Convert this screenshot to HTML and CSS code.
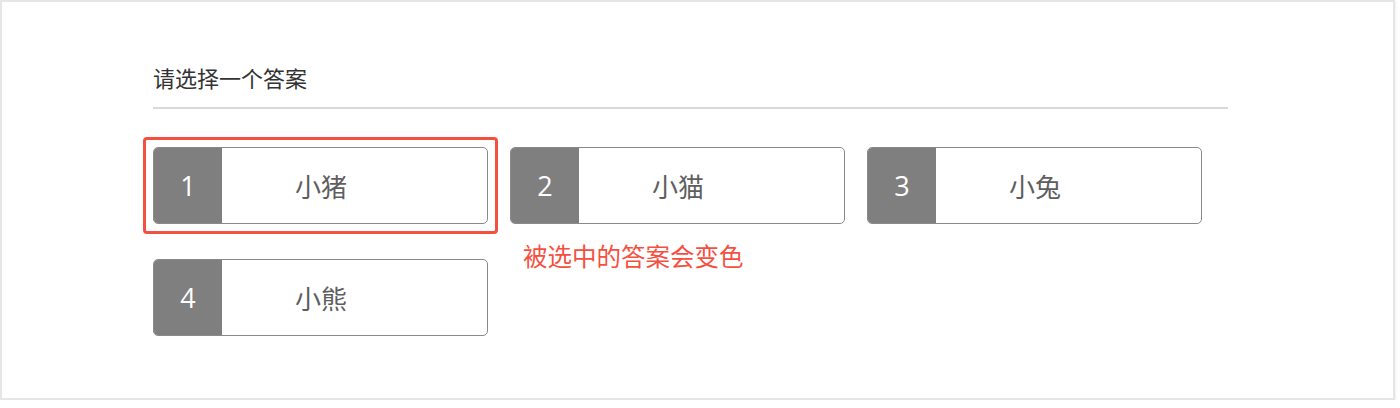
FILE: index.html
```html
<!DOCTYPE html>
<html lang="zh-CN">
<head>
    <meta charset="UTF-8">
    <meta name="viewport" content="width=device-width, initial-scale=1.0">
    <title>请选择一个答案</title>
    <link rel="stylesheet" href="styles.css">
</head>
<body>
    <div class="frame">
        <div class="question">
            <h2 class="question-title">请选择一个答案</h2>
            <div class="options">
                <div class="option selected">
                    <span class="num">1</span>
                    <span class="label">小猪</span>
                </div>
                <div class="option">
                    <span class="num">2</span>
                    <span class="label">小猫</span>
                </div>
                <div class="option">
                    <span class="num">3</span>
                    <span class="label">小兔</span>
                </div>
                <div class="option">
                    <span class="num">4</span>
                    <span class="label">小熊</span>
                </div>
                <div class="note">被选中的答案会变色</div>
            </div>
        </div>
    </div>
</body>
</html>
```

FILE: styles.css
```css
body {
    margin: 0;
    background: #fff;
    font-family: "Noto Sans CJK SC", "Open Sans", sans-serif;
}
.frame {
    width: 1391px;
    height: 396px;
    border: 2px solid #e6e6e6;
    box-shadow: 1px 1px 2px rgba(0, 0, 0, 0.06);
    background: #fff;
}
.question {
    width: 1075px;
    padding-left: 151px;
    padding-top: 57px;
}
.question-title {
    margin: 0;
    padding-bottom: 12px;
    border-bottom: 2px solid #d9d9d9;
    font-size: 22px;
    font-weight: 400;
    line-height: 36px;
    color: #333;
}
.options {
    position: relative;
    display: grid;
    grid-template-columns: repeat(3, 335px);
    column-gap: 22px;
    row-gap: 35px;
    margin-top: 38px;
}
.option {
    position: relative;
    display: flex;
    height: 75px;
    border: 1px solid #8a8a8a;
    border-radius: 5px;
    background: #fff;
}
.option.selected::after {
    content: '';
    position: absolute;
    top: -11px;
    left: -11px;
    right: -11px;
    bottom: -11px;
    border: 3px solid #f5503f;
    border-radius: 4px;
}
.num {
    width: 68px;
    display: flex;
    align-items: center;
    justify-content: center;
    background: #7f7f7f;
    border-radius: 4px 0 0 4px;
    color: #fff;
    font-family: "Open Sans", sans-serif;
    font-size: 27px;
    font-weight: 500;
}
.label {
    flex: 1;
    display: flex;
    align-items: center;
    padding-left: 73px;
    color: #5e5e5e;
    font-size: 26px;
}
.note {
    position: absolute;
    left: 370px;
    top: 93px;
    color: #f5503f;
    font-size: 24.5px;
    line-height: 32px;
}
```
